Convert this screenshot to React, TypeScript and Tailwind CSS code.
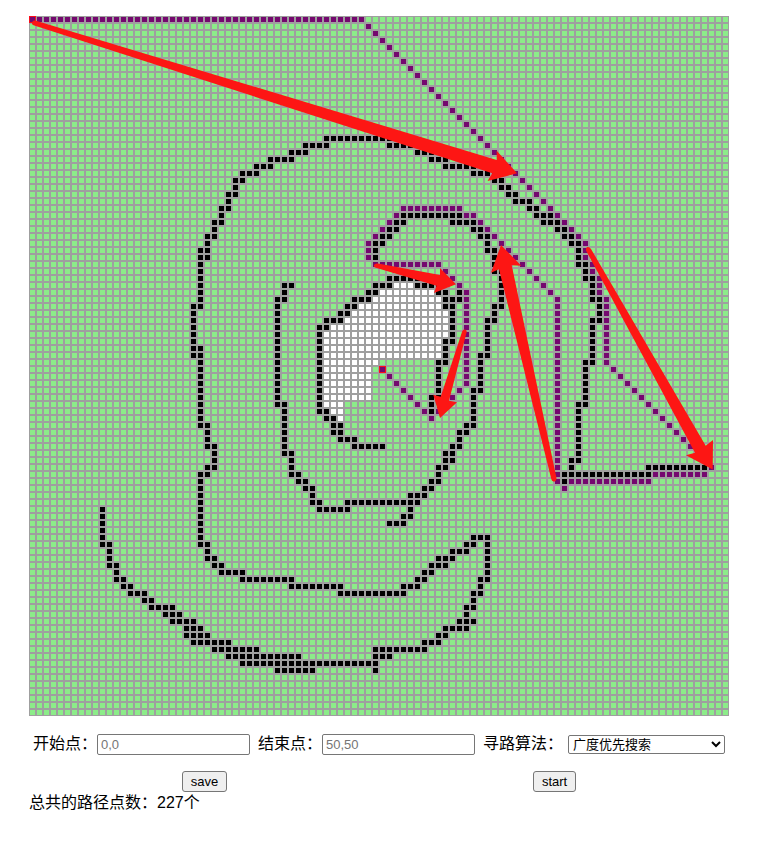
import { useState } from "react";

type Span = [row: number, from: number, to: number];

const CELL = 7;
const SIZE = 100;

/** Expands runs of rows that all hold the same single column. */
const column = (col: number, from: number, to: number): Span[] =>
  Array.from({ length: to - from + 1 }, (_, i) => [from + i, col, col] as Span);

/** A diagonal line: one cell per row, moving `step` columns each time. */
const diagonal = (row: number, col: number, count: number, step = 1): Span[] =>
  Array.from({ length: count }, (_, i) => [row + i, col + i * step, col + i * step] as Span);

const walls: Span[] = [
  // outer spiral, left side
  [17, 42, 51], [18, 39, 42], [19, 37, 39], [20, 34, 37], [21, 32, 34], [22, 30, 32],
  [23, 29, 30], [24, 29, 29], [25, 28, 29], [26, 28, 28], [27, 27, 28], [28, 27, 27],
  [29, 26, 27], [30, 26, 26], [31, 25, 26], [32, 25, 25], [33, 24, 25], [34, 24, 25],
  ...column(24, 35, 40), [41, 23, 24], ...column(23, 42, 46), [47, 23, 24], [48, 23, 24],
  ...column(24, 49, 57), [58, 24, 25], ...column(25, 59, 60), [61, 25, 26],
  ...column(26, 62, 63), [64, 25, 26], [65, 24, 25], ...column(24, 66, 74),
  [75, 24, 25], [76, 25, 25], [77, 25, 26], [78, 26, 27], [79, 27, 30], [80, 30, 37],
  [81, 37, 44], [82, 44, 53], [81, 53, 55], [80, 55, 56], [79, 56, 57], [78, 57, 59],
  [77, 58, 60], [76, 60, 62], [75, 62, 63], [74, 63, 65],
  // outer spiral, right side
  [18, 51, 55], [19, 55, 57], [20, 57, 59], [21, 59, 63], [22, 63, 66], [23, 66, 67],
  [24, 67, 68], [25, 68, 69], [26, 69, 71], [27, 71, 72], [28, 72, 74], [29, 73, 75],
  [30, 75, 76], [31, 76, 77], [32, 77, 78], ...column(78, 33, 34), [35, 78, 79],
  [36, 79, 79], [37, 79, 80], ...column(80, 38, 39), [40, 80, 81], ...column(81, 41, 42),
  [43, 80, 81], ...column(80, 44, 48), [49, 79, 80], ...column(79, 50, 54), [55, 78, 79],
  ...column(78, 56, 62), [63, 77, 78], [64, 77, 77], [65, 76, 88], [64, 88, 96], [66, 76, 76],
  // lower hull
  ...column(10, 70, 74), [75, 10, 11], ...column(11, 76, 77), [78, 11, 12], [79, 12, 12],
  [80, 12, 13], [81, 13, 14], [82, 14, 16], [83, 16, 17], [84, 17, 20], [85, 19, 21],
  [86, 20, 23], [87, 22, 24], [88, 22, 25], [89, 23, 28], [90, 26, 32], [91, 28, 38],
  [92, 30, 49], [93, 35, 40], [93, 49, 49], [91, 49, 51], [90, 49, 56], [89, 56, 58],
  [88, 58, 59], [87, 59, 62], [86, 61, 63], [85, 62, 62], [84, 62, 63], [83, 63, 63],
  [82, 63, 64], [81, 64, 64], [80, 64, 65], ...column(65, 75, 79),
  // middle spiral
  [38, 36, 37], [39, 36, 36], [40, 35, 36], ...column(35, 41, 54), [55, 35, 36],
  ...column(36, 56, 61), [62, 36, 37], ...column(37, 63, 64), [65, 37, 38], [66, 38, 39],
  [67, 39, 40], [68, 40, 40], [69, 40, 41], [70, 41, 45], [69, 45, 55], [68, 54, 56],
  [67, 56, 57], [66, 57, 58], [65, 58, 58], [64, 58, 59], [63, 59, 60], [62, 59, 60],
  [61, 60, 61], [60, 61, 61], [59, 61, 62], [58, 62, 63], ...column(63, 54, 57),
  [53, 63, 64], ...column(64, 49, 52), [48, 64, 65], ...column(65, 44, 47), [43, 65, 66],
  [42, 66, 66], [41, 66, 67], ...column(67, 37, 40), [36, 66, 67], ...column(66, 34, 35),
  [33, 65, 66], [32, 65, 65], [31, 64, 65], [30, 63, 64], [29, 60, 63], [28, 53, 61],
  [29, 52, 53], [30, 51, 52], [31, 50, 51], [32, 49, 50], ...column(49, 33, 34),
  [70, 54, 54], [71, 53, 54], [72, 51, 53],
  // core
  [37, 51, 55], [38, 49, 51], [39, 48, 49], [40, 46, 48], [41, 45, 46], [42, 44, 45],
  [43, 42, 44], [44, 41, 42], ...column(41, 45, 55), [56, 41, 42], [57, 42, 43],
  [58, 43, 44], [59, 43, 44], [60, 44, 46], [61, 46, 50], [38, 55, 58], [39, 58, 59],
  [39, 61, 61], [40, 59, 61], [41, 59, 60], ...column(60, 42, 45), [46, 59, 60],
  ...column(59, 47, 48), [49, 58, 59], ...column(58, 50, 53), [54, 57, 58],
  ...column(57, 55, 56),
];

const route: Span[] = [
  [0, 0, 47], ...diagonal(1, 48, 32), ...column(79, 33, 34), ...column(80, 35, 36),
  ...column(81, 37, 39), ...column(82, 40, 49), ...diagonal(50, 83, 15), [65, 89, 96],
  [66, 77, 88], [67, 76, 76], ...column(75, 40, 66), ...diagonal(30, 65, 10),
  [29, 64, 64], [28, 62, 63], [27, 53, 61], ...diagonal(28, 52, 5, -1),
  ...column(48, 33, 34), ...column(48, 32, 32), [35, 49, 58], ...diagonal(36, 59, 3),
  ...column(62, 39, 52), ...diagonal(53, 61, 5, -1), ...diagonal(50, 50, 7),
];

const unvisited: Span[] = [
  [38, 52, 54], [39, 50, 57], [40, 49, 58], [41, 47, 58], [42, 46, 59], [43, 45, 59],
  [44, 43, 59], [45, 42, 59], [46, 42, 58], [47, 42, 58], [48, 42, 58], [49, 42, 49],
  [50, 42, 48], [51, 42, 48], [52, 42, 48], [53, 42, 48], [54, 42, 48], [55, 42, 44],
  [56, 43, 44], [57, 44, 44],
];

const toPath = (spans: Span[]) =>
  spans
    .flatMap(([row, from, to]) =>
      Array.from(
        { length: to - from + 1 },
        (_, i) => `M${(from + i) * CELL + 1} ${row * CELL + 1}h5v5h-5z`,
      ),
    )
    .join("");

const arrows = [
  "M3.5 5.5Q4.5 4 7 4.7L467.7 144L467.7 134.7L488 157.3L458.5 165L463.3 157.3L4.5 9.3Q2 8 3.5 5.5Z",
  "M345 249Q346 247 349 247.5L411 259L411 252L427 268.3L405 277L407.5 269.7L346 251.5Q344.5 250.5 345 249Z",
  "M433.3 315Q434.5 313.3 436.5 313.7Q438 314.5 437.7 316L420 384.7L428 386.3L411 402L404.3 378.7L411.7 380.7Z",
  "M472 229L492.3 249.7L482.7 249.3L527.5 462Q527.5 465.3 525 465.7Q522.5 465.3 522.3 463L470 253.3L462 256.7Z",
  "M557 234.5Q556.5 231.5 558.5 231Q560.5 230.7 562 233L676.7 429.7L684 424L683.7 453.5L657 439.3L666 436.7Z",
];

function Board() {
  return (
    <svg
      viewBox="0 0 700 700"
      className="block h-auto w-full"
      role="img"
      aria-label="寻路地图"
    >
      <defs>
        <pattern id="cell" width={CELL} height={CELL} patternUnits="userSpaceOnUse">
          <rect width="7" height="7" fill="#9f9f9f" />
          <rect x="1" y="1" width="5" height="5" fill="#8cec89" />
        </pattern>
      </defs>
      <g shapeRendering="crispEdges">
        <rect width={SIZE * CELL} height={SIZE * CELL} fill="url(#cell)" />
        <path d={toPath(unvisited)} fill="#ffffff" />
        <path d={toPath(route)} fill="#75086f" />
        <path d={toPath(walls)} fill="#000000" />
        {[0, 50].map((n) => (
          <rect
            key={n}
            x={n * CELL + 0.5}
            y={n * CELL + 0.5}
            width="6"
            height="6"
            fill="none"
            stroke="#fb0d1b"
          />
        ))}
      </g>
      {arrows.map((d) => (
        <path key={d} d={d} fill="#fd1614" />
      ))}
    </svg>
  );
}

const inputClass =
  "h-[21px] w-[153px] rounded-[2px] border border-[#767676] bg-white px-[3px] text-[13px] placeholder:text-[#757575]";
const buttonClass =
  "h-[21px] rounded-[3px] border border-[#767676] bg-[#efefef] px-2 text-[13px] leading-none";

export default function App() {
  const [start, setStart] = useState("");
  const [end, setEnd] = useState("");

  return (
    <main className="mx-auto w-full max-w-[700px] pt-4 font-['Liberation_Sans','Noto_Sans_CJK_SC',sans-serif] text-base text-black">
      <Board />
      <form onSubmit={(e) => e.preventDefault()}>
        <div className="mt-4 flex flex-wrap items-center gap-2 pl-1 whitespace-nowrap">
          <div className="flex items-center">
            <label htmlFor="start">开始点：</label>
            <input id="start" className={inputClass} placeholder="0,0" value={start} onChange={(e) => setStart(e.target.value)} />
          </div>
          <div className="flex items-center">
            <label htmlFor="end">结束点：</label>
            <input id="end" className={inputClass} placeholder="50,50" value={end} onChange={(e) => setEnd(e.target.value)} />
          </div>
          <div className="flex items-center gap-[5px]">
            <label htmlFor="algorithm">寻路算法：</label>
            <select id="algorithm" className="h-[19px] w-[157px] rounded-[2px] border border-[#767676] bg-white text-[13px]">
              <option>广度优先搜索</option>
            </select>
          </div>
        </div>
        <div className="mt-[15px] flex justify-around">
          <button type="button" className={buttonClass}>save</button>
          <button type="submit" className={buttonClass}>start</button>
        </div>
      </form>
      <p className="leading-[22px]">总共的路径点数：227个</p>
    </main>
  );
}
